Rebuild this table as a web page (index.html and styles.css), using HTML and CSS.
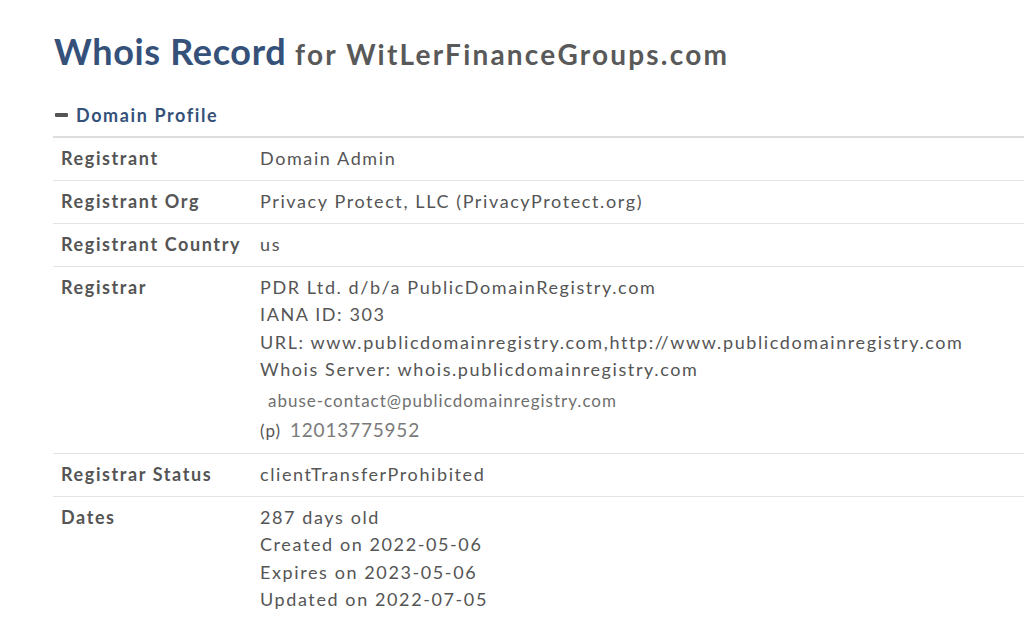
FILE: index.html
```html
<!DOCTYPE html>
<html>
<head>
<meta charset="utf-8">
<link rel="stylesheet" href="styles.css">
</head>
<body>
<div class="page">
  <h1 class="title"><span class="title-main">Whois Record</span> <span class="title-sub">for WitLerFinanceGroups.com</span></h1>
  <div class="section">
    <div class="section-head"><span class="minus"></span><span class="section-name">Domain Profile</span></div>
    <div class="rows">
      <div class="row"><div class="label">Registrant</div><div class="value">Domain Admin</div></div>
      <div class="row"><div class="label">Registrant Org</div><div class="value">Privacy Protect, LLC (PrivacyProtect.org)</div></div>
      <div class="row"><div class="label">Registrant Country</div><div class="value">us</div></div>
      <div class="row"><div class="label">Registrar</div><div class="value">
        <div class="line">PDR Ltd. d/b/a PublicDomainRegistry.com</div>
        <div class="line">IANA ID: 303</div>
        <div class="line">URL: www.publicdomainregistry.com,http://www.publicdomainregistry.com</div>
        <div class="line">Whois Server: whois.publicdomainregistry.com</div>
        <div class="line email">abuse-contact@publicdomainregistry.com</div>
        <div class="line phone"><span class="p">(p)</span><span class="num">12013775952</span></div>
      </div></div>
      <div class="row"><div class="label">Registrar Status</div><div class="value">clientTransferProhibited</div></div>
      <div class="row"><div class="label">Dates</div><div class="value">
        <div class="line">287 days old</div>
        <div class="line">Created on 2022-05-06</div>
        <div class="line">Expires on 2023-05-06</div>
        <div class="line">Updated on 2022-07-05</div>
      </div></div>
    </div>
  </div>
</div>
</body>
</html>
```
FILE: styles.css
```css
html, body {
  margin: 0;
  padding: 0;
  background: #fff;
}
body {
  font-family: Lato, "Open Sans", sans-serif;
  color: #555;
}
.page {
  padding: 27px 0 0 53px;
}
.title {
  margin: 0 0 0 1px;
  font-weight: 700;
  line-height: 48px;
  white-space: nowrap;
}
.title-main {
  font-size: 36px;
  color: #35517a;
  letter-spacing: 0.65px;
}
.title-sub {
  font-size: 28px;
  color: #595959;
  letter-spacing: 2.2px;
  margin-left: 1px;
}
.section {
  margin-top: 25px;
}
.section-head {
  display: flex;
  align-items: center;
  height: 24px;
  padding-bottom: 8.5px;
}
.minus {
  width: 13px;
  height: 4px;
  background: #555;
  margin: 0 8px 0 2px;
  border-radius: 1px;
}
.section-name {
  font-size: 18px;
  font-weight: 700;
  color: #35517a;
  letter-spacing: 1.6px;
}
.rows {
  border-top: 2px solid #ddd;
}
.row {
  display: grid;
  grid-template-columns: 207px 1fr;
  border-bottom: 1px solid #e3e3e3;
  padding: 7.3px 0;
  font-size: 18px;
  line-height: 27.4px;
  letter-spacing: 1.6px;
}
.label {
  padding-left: 8px;
  font-weight: 700;
  color: #555;
}
.value {
  color: #555;
  white-space: nowrap;
}
.email {
  font-size: 17px;
  line-height: 30px;
  padding: 3px 0 0 8px;
  letter-spacing: 1px;
  color: #707070;
}
.phone {
  line-height: 28px;
  display: flex;
  align-items: baseline;
}
.p {
  font-size: 17px;
  letter-spacing: 1px;
  color: #555;
  margin-right: 9px;
}
.num {
  font-size: 19px;
  color: #7a7a7a;
  letter-spacing: 0.8px;
}
```
